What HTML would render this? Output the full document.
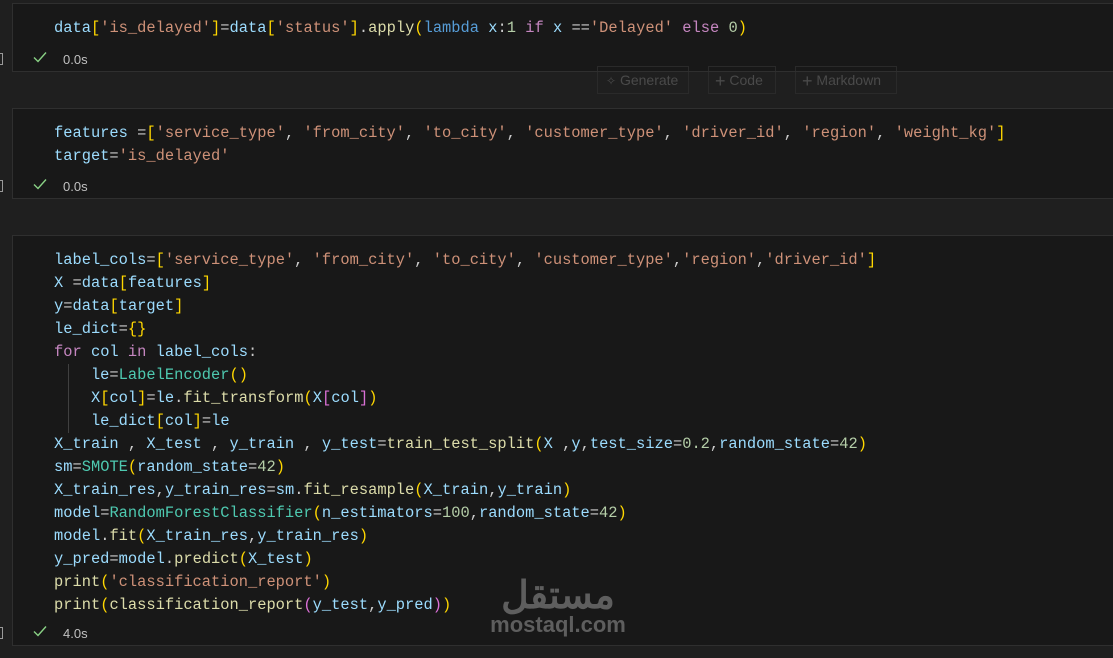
<!DOCTYPE html>
<html><head><meta charset="utf-8"><style>
body{margin:0;width:1113px;height:658px;background:#1f1f1f;overflow:hidden;position:relative;font-family:"Liberation Mono",monospace;}
.cell{position:absolute;left:12px;right:-2px;background:#181818;border:1px solid #2f2f2f;}
.code{position:absolute;left:41px;font-size:15.4px;line-height:23px;color:#9cdcfe;white-space:pre;}
.st{position:absolute;left:50px;font-family:"Liberation Sans",sans-serif;font-size:13px;color:#c0c0c0;}
.ck{position:absolute;left:20px;width:14px;height:14px;}
.br{position:absolute;left:-3px;width:5px;height:10px;border:1px solid #999;border-left:none;}
.s{color:#ce9178}.y{color:#ffd700}.p{color:#da70d6}.w{color:#cccccc}.k{color:#569cd6}.m{color:#c586c0}.n{color:#b5cea8}.f{color:#dcdcaa}.c{color:#4ec9b0}
.btn{position:absolute;top:66px;height:26px;border:1px solid #2a2a2a;font-family:"Liberation Sans",sans-serif;font-size:14px;color:#4a4a4a;line-height:26px;}
.guide{position:absolute;left:55px;width:1px;background:#404040;}
</style></head><body>
<div class="cell" style="top:3px;height:67px">
 <div class="code" style="top:13px">data<span class="y">[</span><span class="s">'is_delayed'</span><span class="y">]</span><span class="w">=</span>data<span class="y">[</span><span class="s">'status'</span><span class="y">]</span><span class="w">.</span><span class="f">apply</span><span class="y">(</span><span class="k">lambda</span> x<span class="w">:</span><span class="n">1</span> <span class="m">if</span> x <span class="w">==</span><span class="s">'Delayed'</span> <span class="m">else</span> <span class="n">0</span><span class="y">)</span></div>
 <svg class="ck" style="top:46px" viewBox="0 0 14 14"><path d="M1 7.5l4 4L13 2.5" stroke="#89d185" stroke-width="1.4" fill="none"/></svg>
 <div class="st" style="top:48px">0.0s</div>
</div>
<div class="br" style="top:53px"></div>
<div class="btn" style="left:597px;width:90px"><span style="margin-left:8px;font-size:12px">✧</span> Generate</div>
<div class="btn" style="left:708px;width:66px"><span style="margin-left:6px;font-size:18px;vertical-align:-2px">+</span> Code</div>
<div class="btn" style="left:795px;width:100px"><span style="margin-left:6px;font-size:18px;vertical-align:-2px">+</span> Markdown</div>
<div style="position:absolute;left:580px;right:190px;top:71px;height:1px;background:#2f2f2f"></div>

<div class="cell" style="top:108px;height:89px">
 <div class="code" style="top:13px">features <span class="w">=</span><span class="y">[</span><span class="s">'service_type'</span><span class="w">, </span><span class="s">'from_city'</span><span class="w">, </span><span class="s">'to_city'</span><span class="w">, </span><span class="s">'customer_type'</span><span class="w">, </span><span class="s">'driver_id'</span><span class="w">, </span><span class="s">'region'</span><span class="w">, </span><span class="s">'weight_kg'</span><span class="y">]</span>
target<span class="w">=</span><span class="s">'is_delayed'</span></div>
 <svg class="ck" style="top:68px" viewBox="0 0 14 14"><path d="M1 7.5l4 4L13 2.5" stroke="#89d185" stroke-width="1.4" fill="none"/></svg>
 <div class="st" style="top:70px">0.0s</div>
</div>
<div class="br" style="top:180px"></div>

<div class="cell" style="top:235px;height:409px">
 <div class="code" style="top:13px">label_cols<span class="w">=</span><span class="y">[</span><span class="s">'service_type'</span><span class="w">, </span><span class="s">'from_city'</span><span class="w">, </span><span class="s">'to_city'</span><span class="w">, </span><span class="s">'customer_type'</span><span class="w">,</span><span class="s">'region'</span><span class="w">,</span><span class="s">'driver_id'</span><span class="y">]</span>
X <span class="w">=</span>data<span class="y">[</span>features<span class="y">]</span>
y<span class="w">=</span>data<span class="y">[</span>target<span class="y">]</span>
le_dict<span class="w">=</span><span class="y">{}</span>
<span class="m">for</span> col <span class="m">in</span> label_cols<span class="w">:</span>
    le<span class="w">=</span><span class="c">LabelEncoder</span><span class="y">()</span>
    X<span class="y">[</span>col<span class="y">]</span><span class="w">=</span>le<span class="w">.</span><span class="f">fit_transform</span><span class="y">(</span>X<span class="p">[</span>col<span class="p">]</span><span class="y">)</span>
    le_dict<span class="y">[</span>col<span class="y">]</span><span class="w">=</span>le
X_train <span class="w">,</span> X_test <span class="w">,</span> y_train <span class="w">,</span> y_test<span class="w">=</span><span class="f">train_test_split</span><span class="y">(</span>X <span class="w">,</span>y<span class="w">,</span>test_size<span class="w">=</span><span class="n">0.2</span><span class="w">,</span>random_state<span class="w">=</span><span class="n">42</span><span class="y">)</span>
sm<span class="w">=</span><span class="c">SMOTE</span><span class="y">(</span>random_state<span class="w">=</span><span class="n">42</span><span class="y">)</span>
X_train_res<span class="w">,</span>y_train_res<span class="w">=</span>sm<span class="w">.</span><span class="f">fit_resample</span><span class="y">(</span>X_train<span class="w">,</span>y_train<span class="y">)</span>
model<span class="w">=</span><span class="c">RandomForestClassifier</span><span class="y">(</span>n_estimators<span class="w">=</span><span class="n">100</span><span class="w">,</span>random_state<span class="w">=</span><span class="n">42</span><span class="y">)</span>
model<span class="w">.</span><span class="f">fit</span><span class="y">(</span>X_train_res<span class="w">,</span>y_train_res<span class="y">)</span>
y_pred<span class="w">=</span>model<span class="w">.</span><span class="f">predict</span><span class="y">(</span>X_test<span class="y">)</span>
<span class="f">print</span><span class="y">(</span><span class="s">'classification_report'</span><span class="y">)</span>
<span class="f">print</span><span class="y">(</span><span class="f">classification_report</span><span class="p">(</span>y_test<span class="w">,</span>y_pred<span class="p">)</span><span class="y">)</span></div>
 <div class="guide" style="top:128px;height:69px"></div>
 <svg class="ck" style="top:388px" viewBox="0 0 14 14"><path d="M1 7.5l4 4L13 2.5" stroke="#89d185" stroke-width="1.4" fill="none"/></svg>
 <div class="st" style="top:390px">4.0s</div>
</div>
<div class="br" style="top:627px"></div>

<div style="position:absolute;left:488px;top:578px;width:140px;text-align:center;color:#5e5e5e;font-family:'Liberation Sans','Noto Sans CJK SC',sans-serif;font-weight:bold;">
 <div style="font-size:38px;line-height:36px">مستقل</div>
 <div style="font-size:22px;line-height:22px">mostaql.com</div>
</div>
</body></html>
